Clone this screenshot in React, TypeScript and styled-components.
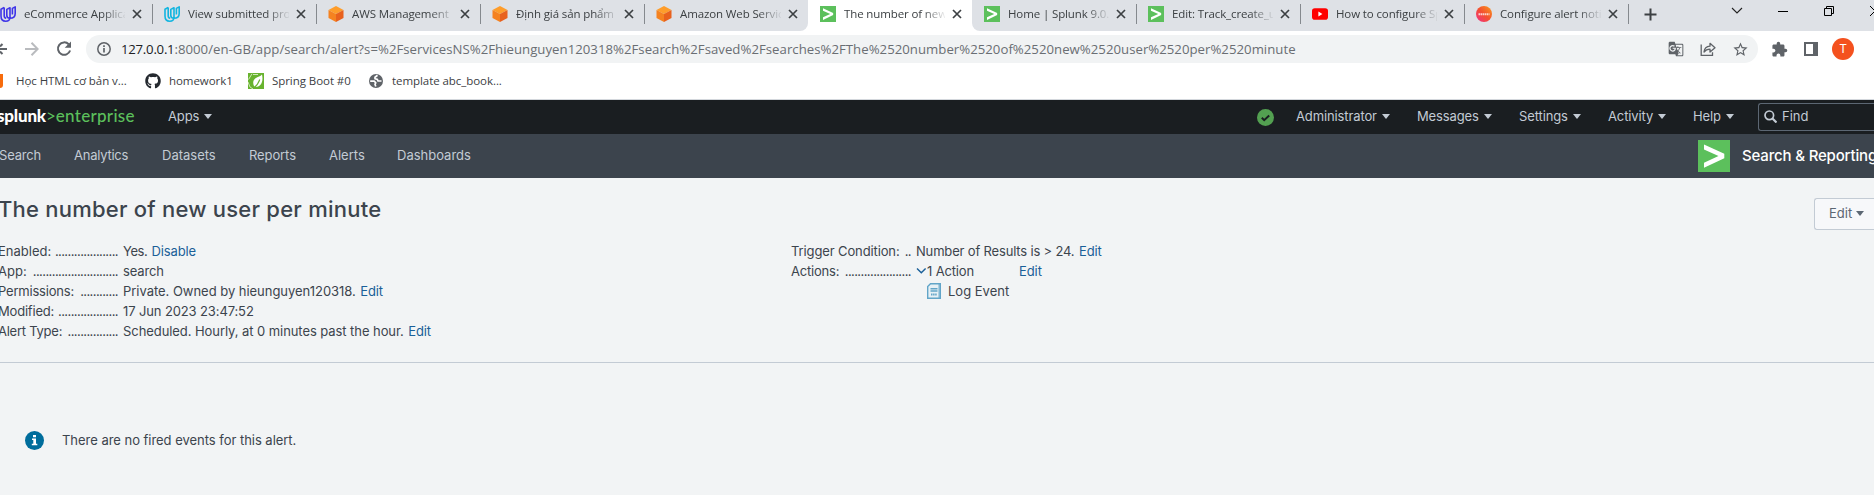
import React from "react";
import styled, { createGlobalStyle } from "styled-components";
import { FaGithub } from "react-icons/fa";
import { MdExtension, MdGTranslate, MdStarBorder } from "react-icons/md";

const chromeFont = `"Open Sans", "Noto Sans", sans-serif`;
const appFont = `Inter, "Liberation Sans", sans-serif`;

const GlobalStyle = createGlobalStyle`
  * { box-sizing: border-box; }
  body { margin: 0; background: #f2f4f5; overflow: hidden; }
  svg { display: block; flex: none; }
`;

const Page = styled.div`
  width: 1874px;
  height: 495px;
  overflow: hidden;
  background: #f2f4f5;
`;

/* Browser chrome */

const Browser = styled.header`
  height: 100px;
  background: #fff;
  border-bottom: 1px solid #d3d7dc;
  font-family: ${chromeFont};
  color: #3c4043;
`;

const TabStrip = styled.div`
  display: flex;
  height: 31px;
`;

const LeftTabs = styled.div`
  display: flex;
  justify-content: flex-end;
  width: 808px;
  background: #dee1e6;
  border-bottom-right-radius: 8px;
  overflow: hidden;
`;

const RightTabs = styled.div`
  display: flex;
  flex: 1;
  background: #dee1e6;
  border-bottom-left-radius: 8px;
  overflow: hidden;
`;

const TabBox = styled.div`
  display: flex;
  flex: none;
  align-items: center;
  width: 164px;
  height: 28px;
  padding-left: 12px;
`;

const Separator = styled.i`
  width: 1px;
  height: 20px;
  margin: 4px -1px 0 0;
  flex: none;
  background: #85898e;
`;

const TabTitle = styled.span`
  width: 101px;
  margin: 0 7px 0 8px;
  overflow: hidden;
  white-space: nowrap;
  font-size: 11.5px;
  line-height: 18px;
  letter-spacing: -0.12px;
  mask-image: linear-gradient(to right, #000 78px, transparent 103px);
`;

const PlusButton = styled.div`
  display: flex;
  align-items: center;
  height: 28px;
  padding-left: 16px;
`;

const WindowControls = styled.div`
  display: flex;
  align-items: center;
  height: 22px;
  margin-left: 75px;
`;

const ControlSlot = styled.div<{ $w: number }>`
  display: flex;
  flex: none;
  justify-content: center;
  width: ${(p) => p.$w}px;
`;

const Toolbar = styled.div`
  display: flex;
  align-items: center;
  height: 36px;
  color: #5f6368;
`;

const NavButtons = styled.div`
  display: flex;
  align-items: center;
  width: 86px;
  gap: 17px;
`;

const Omnibox = styled.div`
  display: flex;
  align-items: center;
  width: 1672px;
  height: 28px;
  padding: 0 9px 0 11px;
  border-radius: 14px;
  background: #f1f3f4;
`;

const Url = styled.span`
  flex: 1;
  margin-left: 10px;
  font-size: 13.2px;
  line-height: 20px;
  letter-spacing: 0.026px;
  white-space: nowrap;
  color: #6a6e73;
`;

const Host = styled.span`
  color: #202124;
  letter-spacing: -0.25px;
`;

const OmniIcons = styled.div`
  display: flex;
  align-items: center;
  gap: 16px;
`;

const Extensions = styled.div`
  display: flex;
  align-items: center;
  gap: 15px;
  margin-left: 13px;
`;

const Avatar = styled.div`
  display: flex;
  align-items: center;
  justify-content: center;
  width: 22px;
  height: 22px;
  margin-left: -2px;
  border-radius: 50%;
  background: #f4511e;
  color: #fff;
  font: 12px/22px Roboto, sans-serif;
`;

const Bookmarks = styled.div`
  display: flex;
  align-items: center;
  height: 28px;
`;

const Bookmark = styled.div<{ $w: number }>`
  display: flex;
  flex: none;
  align-items: center;
  gap: 8px;
  width: ${(p) => p.$w}px;
  font-size: 11.5px;
  line-height: 18px;
  letter-spacing: -0.06px;
  white-space: nowrap;
`;

const HtmlBadge = styled.i`
  width: 3px;
  height: 14px;
  margin-right: 5px;
  background: #f76b0c;
  border-bottom-right-radius: 3px;
`;

/* Splunk header */

const GlobalBar = styled.nav`
  display: flex;
  align-items: center;
  height: 34px;
  background: #1a1e21;
  font-family: ${appFont};
  color: #c3cbd4;
`;

const Brand = styled.div`
  display: flex;
  align-items: center;
  width: 171px;
  margin-left: -3px;
  padding-bottom: 2px;
  font: 17px/22px Lato, sans-serif;
  color: #5cc05c;
`;

const BrandName = styled.b`
  font-weight: 900;
  color: #fff;
  letter-spacing: -0.2px;
`;

const BrandProduct = styled.span`
  font-weight: 500;
  letter-spacing: 0.3px;
`;

const MenuItem = styled.div<{ $w: number }>`
  display: flex;
  align-items: center;
  gap: 5px;
  flex: none;
  width: ${(p) => p.$w}px;
  padding-bottom: 2px;
  font-size: 13px;
  line-height: 20px;
  letter-spacing: -0.12px;
`;

const Caret = styled.i<{ $c?: string }>`
  border: solid transparent;
  border-width: 5px 4px 0;
  border-top-color: ${(p) => p.$c || "#c3cbd4"};
`;

const Status = styled.div`
  display: flex;
  margin: 0 22px 0 auto;
`;

const FindBox = styled.div`
  display: flex;
  align-items: center;
  gap: 5px;
  flex: none;
  width: 116px;
  height: 28px;
  padding: 0 0 2px 5px;
  border: 1px solid #5c6773;
  border-right: 0;
  border-radius: 3px 0 0 3px;
  font-size: 13px;
`;

const AppBar = styled.nav`
  display: flex;
  align-items: center;
  height: 44px;
  padding-left: 74px;
  background: #3c444d;
  font: 13px/20px ${appFont};
  color: #c3cbd4;
`;

const AppLink = styled.a<{ $w: number; $ls?: number }>`
  flex: none;
  width: ${(p) => p.$w}px;
  padding-bottom: 2px;
  letter-spacing: ${(p) => p.$ls || 0}px;

  &:first-child {
    margin-left: -75px;
  }
`;

const AppName = styled.div`
  display: flex;
  align-items: center;
  gap: 12px;
  flex: none;
  width: 176px;
  margin-left: auto;
  white-space: nowrap;
  font-size: 15px;
  font-weight: 500;
  letter-spacing: -0.17px;
  color: #fff;
`;

/* Alert page */

const Main = styled.main`
  font: 13px/20px ${appFont};
  color: #3c444d;
`;

const Summary = styled.section`
  height: 185px;
  border-bottom: 1px solid #c3cbd4;
`;

const TitleRow = styled.div`
  display: flex;
  justify-content: space-between;
  height: 63px;
`;

const Title = styled.h1`
  margin: 17px 0 0 -2px;
  font-size: 22px;
  line-height: 28px;
  font-weight: 500;
  letter-spacing: 0.23px;
`;

const EditButton = styled.div`
  display: flex;
  align-items: center;
  gap: 4px;
  width: 60px;
  height: 32px;
  margin-top: 20px;
  padding: 0 0 2px 14px;
  border: 1px solid #c3cbd4;
  border-right: 0;
  border-radius: 3px 0 0 3px;
  background: #f7f8fa;
  color: #5c6773;
`;

const Columns = styled.div`
  display: flex;
  margin-left: -2px;
`;

const Details = styled.dl<{ $w: number }>`
  width: ${(p) => p.$w}px;
  margin: 0;
`;

const DetailRow = styled.div`
  display: flex;
  height: 20px;
  white-space: nowrap;
`;

const Label = styled.dt<{ $ls?: number }>`
  display: flex;
  justify-content: space-between;
  flex: none;
  width: 120px;
  margin-right: 5px;
  letter-spacing: ${(p) => p.$ls || 0}px;
`;

const Dots = styled.span`
  letter-spacing: -0.59px;
`;

const Value = styled.dd<{ $ls?: number }>`
  display: flex;
  align-items: center;
  margin: 0;
  letter-spacing: ${(p) => p.$ls || 0}px;
`;

const Link = styled.a<{ $gap?: number }>`
  margin-left: ${(p) => p.$gap ?? 4.5}px;
  letter-spacing: -0.1px;
  color: #1a5f98;
`;

const ActionName = styled.div`
  display: flex;
  align-items: center;
  gap: 7px;
  height: 20px;
  padding-left: 136px;
`;

const Empty = styled.section`
  display: flex;
  align-items: center;
  gap: 18px;
  padding: 67px 0 0 25px;
`;

const EmptyText = styled.p`
  margin: 0;
  padding-bottom: 1px;
  letter-spacing: -0.03px;
`;

const Close = () => (
  <svg width="10" height="10" viewBox="0 0 10 10" stroke="#3c4043" strokeWidth="1.7">
    <path d="M1 1l8 8M9 1l-8 8" />
  </svg>
);

const SplunkIcon = ({ size = 16 }: { size?: number }) => (
  <svg width={size} height={size} viewBox="0 0 32 32">
    <path fill="#5cc05c" d="M0 0h32v32H0z" />
    <path fill="#fff" d="M6 4.5l20.3 9.3v4.4L6 27.8v-5.1L20.5 16 6 9.5z" />
  </svg>
);

const UdacityIcon = ({ color }: { color: string }) => (
  <svg width="16" height="16" viewBox="0 0 16 16" fill="none" stroke={color} strokeWidth="1.6" strokeLinejoin="round">
    <path d="M4.200 1.500L1 3.200V10c0 3.400 2 5.200 4.700 5.200 2.400 0 4.300-1.400 4.300-4V1.800L6.800 3.400v5.800c0 2 1 3 3 3 3 0 5.400-1.500 5.400-4.800V.9l-2.800 1.500v6" />
    <path d="M4.200 1.500v8.300c0 1.400.6 2.300 2 2.500" />
  </svg>
);

const CubeIcon = () => (
  <svg width="16" height="16" viewBox="0 0 16 16">
    <path fill="#fe9d2b" d="M8 0l7.500 4L8 8 .5 4z" />
    <path fill="#f58220" d="M.5 4L8 8v8L.5 12z" />
    <path fill="#e8611d" d="M15.500 4L8 8v8l7.500-4z" />
  </svg>
);

const YoutubeIcon = () => (
  <svg width="16" height="16" viewBox="0 0 16 16">
    <rect y="2.300" width="16" height="11.400" rx="2.800" fill="#f00" />
    <path fill="#fff" d="M6.400 5.600v4.800l4-2.400z" />
  </svg>
);

const SplunkDocsIcon = () => (
  <svg width="16" height="16" viewBox="0 0 16 16">
    <defs>
      <linearGradient id="docs" x1="0" y1="1" x2="1" y2="0">
        <stop offset="0" stopColor="#f0308a" />
        <stop offset=".5" stopColor="#f4502f" />
        <stop offset="1" stopColor="#f99d1c" />
      </linearGradient>
    </defs>
    <circle cx="8" cy="8" r="8" fill="url(#docs)" />
    <path d="M2.500 8.300h11" stroke="#fff" strokeWidth="2" strokeDasharray="1.500 .5" opacity=".75" />
  </svg>
);

const SpringIcon = () => (
  <svg width="16" height="16" viewBox="0 0 16 16">
    <path fill="#68b32e" d="M0 0h16v16H0z" />
    <path d="M.5 6.500L4 .8M0 9l2 5 3 2M5 1.500h5" fill="none" stroke="#cfe8b8" />
    <path fill="#fff" d="M14 1.500c1 4.500.5 8.500-2 10.800-1.800 1.700-4.200 2-5.800 1.200C4.500 10.500 5 7 7.500 5.200 9.800 3.600 12.500 3.800 14 1.500z" />
    <path d="M5.500 15c3-2 5-4.800 6.300-8.500" fill="none" stroke="#68b32e" strokeWidth="1.100" />
  </svg>
);

const GlobeIcon = () => (
  <svg width="16" height="16" viewBox="0 0 16 16">
    <circle cx="8" cy="8" r="7" fill="#5f6368" />
    <path
      d="M9.500 2.300L7 4.200v1.600l2.300.6.700 1.600h3.500M2.200 8.200h4l1.600 1.600-.8 1.400.8 2.400"
      fill="none"
      stroke="#fff"
      strokeWidth="1.700"
      strokeLinejoin="round"
    />
  </svg>
);

const tabsLeft = [
  { icon: <UdacityIcon color="#3f35e8" />, title: "eCommerce Applica" },
  { icon: <UdacityIcon color="#12b5e0" />, title: "View submitted proj" },
  { icon: <CubeIcon />, title: "AWS Management" },
  { icon: <CubeIcon />, title: "Định giá sản phẩm" },
  { icon: <CubeIcon />, title: "Amazon Web Servic" },
];

const tabsRight = [
  { icon: <SplunkIcon />, title: "Home | Splunk 9.0.5" },
  { icon: <SplunkIcon />, title: "Edit: Track_create_u" },
  { icon: <YoutubeIcon />, title: "How to configure Sp" },
  { icon: <SplunkDocsIcon />, title: "Configure alert noti" },
];

const Tab = ({ icon, title }: { icon: React.ReactNode; title: string }) => (
  <TabBox>
    {icon}
    <TabTitle>{title}</TabTitle>
    <Close />
  </TabBox>
);

const Menu = ({ label, w }: { label: string; w: number }) => (
  <MenuItem $w={w}>
    {label}
    <Caret />
  </MenuItem>
);

const DetailLabel = ({ text, dots, ls }: { text: string; dots: number; ls?: number }) => (
  <Label $ls={ls}>
    <span>{text}</span>
    <Dots>{".".repeat(dots)}</Dots>
  </Label>
);

export default function App() {
  return (
    <Page>
      <GlobalStyle />
      <Browser>
        <TabStrip>
          <LeftTabs>
            {tabsLeft.map((t, i) => (
              <React.Fragment key={t.title}>
                {i > 0 && <Separator />}
                <Tab {...t} />
              </React.Fragment>
            ))}
          </LeftTabs>
          <Tab icon={<SplunkIcon />} title="The number of new" />
          <RightTabs>
            {tabsRight.map((t, i) => (
              <React.Fragment key={t.title}>
                {i > 0 && <Separator />}
                <Tab {...t} />
              </React.Fragment>
            ))}
            <Separator />
            <PlusButton>
              <svg width="13" height="13" viewBox="0 0 13 13" stroke="#3c4043" strokeWidth="2">
                <path d="M6.500 .5v12M.5 6.500h12" />
              </svg>
            </PlusButton>
            <WindowControls>
              <ControlSlot $w={10}>
                <svg width="12" height="8" viewBox="0 0 12 8" fill="none" stroke="#222" strokeWidth="1.100">
                  <path d="M1 1l5 5 5-5" />
                </svg>
              </ControlSlot>
              <ControlSlot $w={82}>
                <svg width="10" height="2" viewBox="0 0 10 2">
                  <path d="M0 1h10v1H0z" fill="#000" />
                </svg>
              </ControlSlot>
              <ControlSlot $w={10}>
                <svg width="10" height="10" viewBox="0 0 10 10" fill="none" stroke="#000">
                  <path d="M.5 2.500h7v7h-7zM2.500 2V.5h7v7H8" />
                </svg>
              </ControlSlot>
              <ControlSlot $w={82}>
                <svg width="10" height="10" viewBox="0 0 10 10" stroke="#000">
                  <path d="M0 0l10 10M10 0L0 10" />
                </svg>
              </ControlSlot>
            </WindowControls>
          </RightTabs>
        </TabStrip>
        <Toolbar>
          <NavButtons>
            <svg width="8" height="14" viewBox="0 0 8 14" fill="none" stroke="#5f6368" strokeWidth="2">
              <path d="M0 7h7M0 4.500L2.500 2M0 9.500L2.500 12" strokeDasharray="7 0 0 20" />
            </svg>
            <svg width="14" height="14" viewBox="0 0 14 14" fill="none" stroke="#b9bbbe" strokeWidth="2">
              <path d="M0 7h12.500M6.500 .8L12.700 7l-6.200 6.200" />
            </svg>
            <svg width="16" height="16" viewBox="0 0 16 16" fill="none" stroke="#5f6368" strokeWidth="2">
              <path d="M12.700 3.300A6.200 6.200 0 1 0 14.100 9.500" />
              <path d="M15 .5v6.300H8.700z" fill="#5f6368" stroke="none" />
            </svg>
          </NavButtons>
          <Omnibox>
            <svg width="14" height="14" viewBox="0 0 14 14" fill="none" stroke="#5f6368" strokeWidth="1.500">
              <circle cx="7" cy="7" r="6.200" />
              <path d="M7 6v4.500M7 3.300v1.600" strokeWidth="1.700" />
            </svg>
            <Url>
              <Host>127.0.0.1</Host>
              :8000/en-GB/app/search/alert?s=%2FservicesNS%2Fhieunguyen120318%2Fsearch%2Fsaved%2Fsearches%2FThe%2520number%2520of%2520new%2520user%2520per%2520minute
            </Url>
            <OmniIcons>
              <MdGTranslate size={16} />
              <svg width="16" height="16" viewBox="0 0 16 16" fill="none" stroke="#5f6368" strokeWidth="1.300">
                <path d="M1.200 3.500v10.800h11.300v-3" />
                <path d="M4 11c.4-3.600 2.600-5.600 6-5.800V2.300l5 4.400-5 4.300V8.200C7.300 8.200 5.500 9 4 11z" strokeLinejoin="round" />
              </svg>
              <MdStarBorder size={17} />
            </OmniIcons>
          </Omnibox>
          <Extensions>
            <MdExtension size={17} />
            <svg width="16" height="14" viewBox="0 0 16 14">
              <path d="M2 1h12v12H2z" fill="none" stroke="#5f6368" strokeWidth="2" />
              <path d="M10 0h5v14h-5z" fill="#5f6368" />
            </svg>
            <Avatar>T</Avatar>
          </Extensions>
        </Toolbar>
        <Bookmarks>
          <Bookmark $w={145}>
            <HtmlBadge />
            Học HTML cơ bản v...
          </Bookmark>
          <Bookmark $w={103}>
            <FaGithub size={16} color="#24292f" />
            homework1
          </Bookmark>
          <Bookmark $w={120}>
            <SpringIcon />
            Spring Boot #0
          </Bookmark>
          <Bookmark $w={140}>
            <GlobeIcon />
            template abc_book...
          </Bookmark>
        </Bookmarks>
      </Browser>

      <GlobalBar>
        <Brand>
          <BrandName>splunk</BrandName>
          <span>&gt;</span>
          <BrandProduct>enterprise</BrandProduct>
        </Brand>
        <Menu label="Apps" w={60} />
        <Status>
          <svg width="17" height="17" viewBox="0 0 17 17">
            <circle cx="8.500" cy="8.500" r="8.500" fill="#53a051" />
            <path d="M4.800 8.800l2.400 2.400 5-4.700" fill="none" stroke="#1a1e21" strokeWidth="2" />
          </svg>
        </Status>
        <Menu label="Administrator" w={121} />
        <Menu label="Messages" w={102} />
        <Menu label="Settings" w={89} />
        <Menu label="Activity" w={85} />
        <Menu label="Help" w={65} />
        <FindBox>
          <svg width="13" height="13" viewBox="0 0 13 13" fill="none" stroke="#c3cbd4" strokeWidth="1.700">
            <circle cx="5.300" cy="5.300" r="4.300" />
            <path d="M8.500 8.500l4 4" strokeWidth="2.200" />
          </svg>
          Find
        </FindBox>
      </GlobalBar>

      <AppBar>
        <AppLink $w={75} $ls={-0.2}>Search</AppLink>
        <AppLink $w={88} $ls={-0.25}>Analytics</AppLink>
        <AppLink $w={87}>Datasets</AppLink>
        <AppLink $w={80} $ls={-0.1}>Reports</AppLink>
        <AppLink $w={68}>Alerts</AppLink>
        <AppLink $w={90}>Dashboards</AppLink>
        <AppName>
          <SplunkIcon size={32} />
          Search &amp; Reporting
        </AppName>
      </AppBar>

      <Main>
        <Summary>
          <TitleRow>
            <Title>The number of new user per minute</Title>
            <EditButton>
              Edit
              <Caret $c="#5c6773" />
            </EditButton>
          </TitleRow>
          <Columns>
            <Details $w={793}>
              <DetailRow>
                <DetailLabel text="Enabled:" dots={20} />
                <Value $ls={-0.4}>Yes. <Link $gap={4}>Disable</Link></Value>
              </DetailRow>
              <DetailRow>
                <DetailLabel text="App:" dots={27} />
                <Value $ls={-0.15}>search</Value>
              </DetailRow>
              <DetailRow>
                <DetailLabel text="Permissions:" dots={12} ls={-0.2} />
                <Value $ls={-0.03}>Private. Owned by hieunguyen120318. <Link>Edit</Link></Value>
              </DetailRow>
              <DetailRow>
                <DetailLabel text="Modified:" dots={19} ls={-0.2} />
                <Value $ls={-0.12}>17 Jun 2023 23:47:52</Value>
              </DetailRow>
              <DetailRow>
                <DetailLabel text="Alert Type:" dots={16} ls={-0.25} />
                <Value $ls={-0.07}>Scheduled. Hourly, at 0 minutes past the hour. <Link>Edit</Link></Value>
              </DetailRow>
            </Details>
            <Details $w={500}>
              <DetailRow>
                <DetailLabel text="Trigger Condition:" dots={2} ls={-0.12} />
                <Value $ls={-0.17}>Number of Results is &gt; 24. <Link>Edit</Link></Value>
              </DetailRow>
              <DetailRow>
                <DetailLabel text="Actions:" dots={21} ls={-0.2} />
                <Value $ls={-0.15}>
                  <svg width="11" height="8" viewBox="0 0 11 8" fill="none" stroke="#1a5f98" strokeWidth="1.400">
                    <path d="M1 1.500l4.300 4.300 4.300-4.300" />
                  </svg>
                  1 Action <Link $gap={45}>Edit</Link>
                </Value>
              </DetailRow>
              <ActionName>
                <svg width="14" height="16" viewBox="0 0 14 16" fill="none" stroke="#62a5c8">
                  <path d="M3.500 .7h9.800v14.600H.7V3.500z" fill="#e6f0f5" strokeWidth="1.400" />
                  <path d="M12.300 1v14" strokeWidth="2" opacity=".6" />
                  <path d="M3.500 5.700h7M3.500 8h7" strokeWidth="1.600" />
                  <path d="M4 11.500h6" strokeWidth="2.200" strokeDasharray="1.500 .6" />
                </svg>
                Log Event
              </ActionName>
            </Details>
          </Columns>
        </Summary>
        <Empty>
          <svg width="19" height="19" viewBox="0 0 19 19">
            <circle cx="9.500" cy="9.500" r="9.500" fill="#006d9c" />
            <path fill="#fff" d="M8 4h3v2.200H8zM7 7.500h4v5.200h1.300v1.500H6.800v-1.500h1.500V9H7z" />
          </svg>
          <EmptyText>There are no fired events for this alert.</EmptyText>
        </Empty>
      </Main>
    </Page>
  );
}
